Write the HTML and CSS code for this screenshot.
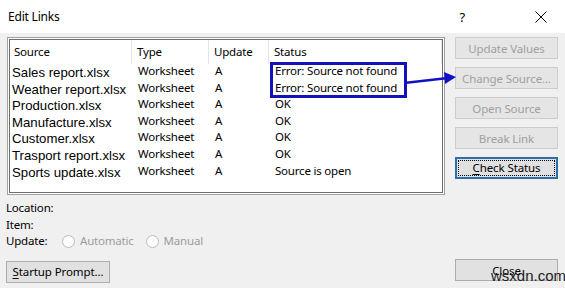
FILE: index.html
```html
<!DOCTYPE html>
<html lang="en">
<head>
    <meta charset="UTF-8">
    <title>Edit Links</title>
    <link rel="stylesheet" href="styles.css">
</head>
<body>
    <div class="dialog">
        <div class="titlebar">
            <span class="title">Edit Links</span>
            <span class="help">?</span>
            <svg class="close-x" width="12" height="12" viewBox="0 0 12 12">
                <path d="M0.5 0.5 L11.5 11.5 M11.5 0.5 L0.5 11.5" stroke="#000" stroke-width="1"/>
            </svg>
        </div>

        <div class="content">
            <div class="left">
                <div class="listbox">
                    <div class="list-head">
                        <div class="col">Source</div>
                        <div class="col">Type</div>
                        <div class="col">Update</div>
                        <div class="col last">Status</div>
                    </div>
                    <div class="row"><span class="src">Sales report.xlsx</span><span>Worksheet</span><span>A</span><span>Error: Source not found</span></div>
                    <div class="row"><span class="src">Weather report.xlsx</span><span>Worksheet</span><span>A</span><span>Error: Source not found</span></div>
                    <div class="row"><span class="src">Production.xlsx</span><span>Worksheet</span><span>A</span><span>OK</span></div>
                    <div class="row"><span class="src">Manufacture.xlsx</span><span>Worksheet</span><span>A</span><span>OK</span></div>
                    <div class="row"><span class="src">Customer.xlsx</span><span>Worksheet</span><span>A</span><span>OK</span></div>
                    <div class="row"><span class="src">Trasport report.xlsx</span><span>Worksheet</span><span>A</span><span>OK</span></div>
                    <div class="row"><span class="src">Sports update.xlsx</span><span>Worksheet</span><span>A</span><span>Source is open</span></div>

                    <div class="highlight"></div>
                </div>

                <div class="fields">
                    <div class="field">Location:</div>
                    <div class="field">Item:</div>
                    <div class="field update-line">
                        <span class="label">Update:</span>
                        <span class="radio"><i></i>Automatic</span>
                        <span class="radio"><i></i>Manual</span>
                    </div>
                </div>

                <button class="btn startup"><u>S</u>tartup Prompt...</button>
            </div>

            <div class="right">
                <button class="btn disabled">Update Values</button>
                <button class="btn disabled">Change Source...</button>
                <button class="btn disabled">Open Source</button>
                <button class="btn disabled">Break Link</button>
                <button class="btn default"><span class="focus"><u>C</u>heck Status</span></button>
                <div class="spacer"></div>
                <button class="btn">Close</button>
            </div>

            <svg class="arrow" width="60" height="20" viewBox="0 0 60 20">
                <line x1="0" y1="13" x2="44" y2="8" stroke="#1212c4" stroke-width="2.5"/>
                <polygon points="40,2 52,7 41,14" fill="#1212c4"/>
            </svg>
        </div>

        <div class="watermark">wsxdn.com</div>
    </div>
</body>
</html>
```

FILE: styles.css
```css
body {
    margin: 0;
    background-color: #f0f0f0;
    font-family: "Noto Sans", "Open Sans", sans-serif;
    font-size: 11.5px;
    letter-spacing: -0.2px;
    color: #000;
}

.dialog {
    position: relative;
    width: 565px;
    height: 288px;
    overflow: hidden;
}

.titlebar {
    height: 33px;
    background-color: #fff;
    display: flex;
    align-items: center;
    padding-left: 8px;
}

.title {
    flex: 1;
    font-size: 12px;
}

.help {
    font-size: 13px;
    margin-right: 70px;
}

.close-x {
    margin-right: 18px;
}

.content {
    position: relative;
    display: flex;
    justify-content: space-between;
    padding: 4px 7px 0 7px;
}

.left {
    width: 438px;
}

.listbox {
    position: relative;
    height: 152px;
    background-color: #fff;
    border: 1px solid #a0a0a0;
    box-shadow: inset 0 0 0 1px #fff, inset 0 0 0 2px #6d6d6d;
    padding: 2px;
}

.list-head {
    display: grid;
    grid-template-columns: 122px 77px 60px 1fr;
    height: 23px;
    line-height: 24px;
}

.list-head .col {
    border-right: 1px solid #e5e5e5;
    padding-left: 5px;
}

.list-head .col:first-child {
    padding-left: 4px;
}

.row {
    display: grid;
    grid-template-columns: 122px 77px 60px 1fr;
    height: 16.6px;
    line-height: 16px;
    white-space: nowrap;
}

.row span {
    padding-left: 6px;
}

.row .src {
    font-family: "Liberation Sans", Arial, sans-serif;
    font-size: 13.2px;
    letter-spacing: 0;
    padding-left: 2px;
    line-height: 19px;
}

.highlight {
    position: absolute;
    left: 262px;
    top: 24px;
    width: 131px;
    height: 30px;
    border: 3px solid #1212b8;
}

.fields {
    padding-top: 5px;
    margin-left: -1px;
}

.field {
    height: 16.5px;
    line-height: 16px;
}

.update-line {
    display: flex;
    align-items: center;
}

.update-line .label {
    width: 56px;
}

.radio {
    display: flex;
    align-items: center;
    color: #9d9d9d;
    margin-right: 12px;
}

.radio i {
    display: inline-block;
    width: 11px;
    height: 11px;
    border: 1px solid #bcbcbc;
    border-radius: 50%;
    background-color: #fcfcfc;
    margin-right: 5px;
}

.btn {
    display: block;
    width: 103px;
    height: 22px;
    padding: 0;
    background-color: #e1e1e1;
    border: 1px solid #adadad;
    font-family: "Noto Sans", "Open Sans", sans-serif;
    font-size: 11.5px;
    letter-spacing: -0.1px;
    color: #000;
    text-align: center;
}

.btn u {
    text-decoration-thickness: 1px;
    text-underline-offset: 2px;
}

.startup {
    margin-top: 11px;
    margin-left: -1px;
    width: 104px;
}

.right {
    width: 103px;
    display: flex;
    flex-direction: column;
    gap: 8px;
    height: 244px;
}

.btn.disabled {
    background-color: #e5e5e5;
    border-color: #cccccc;
    color: #a0a0a0;
}

.btn.default {
    border: 2px solid #2b6ea9;
    padding: 1px;
}

.btn.default .focus {
    display: block;
    height: 100%;
    box-sizing: border-box;
    border: 1px dotted #000;
    line-height: 14px;
}

.spacer {
    flex: 1;
}

.arrow {
    position: absolute;
    left: 404px;
    top: 37px;
}

.watermark {
    position: absolute;
    left: 491px;
    top: 267px;
    font-family: "Liberation Sans", Arial, sans-serif;
    font-size: 15px;
    letter-spacing: 0;
    color: #222;
}
```
